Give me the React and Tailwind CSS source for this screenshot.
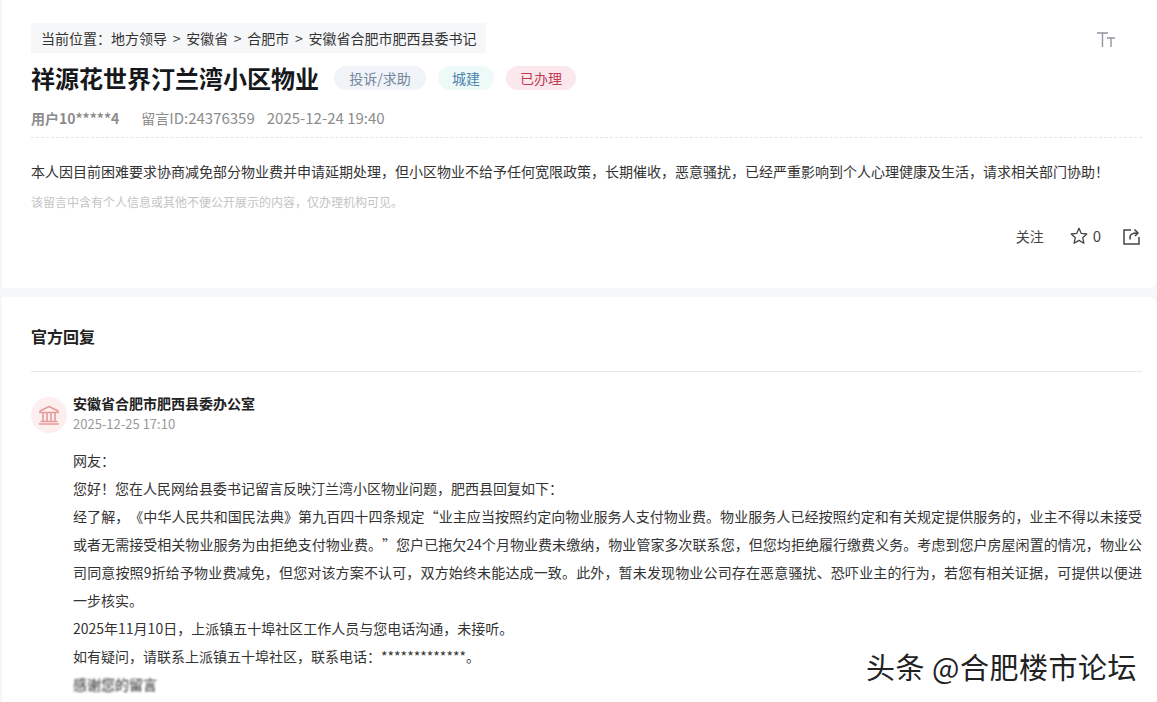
const Landmark = () => (
  <svg width="22" height="20" viewBox="0 0 22 20" fill="none" stroke="#e59a98" strokeWidth="1.6">
    <path d="M11 1.5 2 6v1.5h18V6z" />
    <path d="M5 8v8M9 8v8M13 8v8M17 8v8" />
    <path d="M2.5 16.5h17M1 19h20" />
  </svg>
);

const Star = () => (
  <svg width="18" height="18" viewBox="0 0 18 18" fill="none" stroke="#444" strokeWidth="1.3" strokeLinejoin="round">
    <path d="M9 1.3 11.3 6.4 16.8 7 12.7 10.7 13.9 16.2 9 13.4 4.1 16.2 5.3 10.7 1.2 7 6.7 6.4z" />
  </svg>
);

const Share = () => (
  <svg width="17" height="17" viewBox="0 0 17 17" fill="none" stroke="#444" strokeWidth="1.5">
    <path d="M8 2H1v14h15V9" />
    <path d="M7 11.5V9c0-2.5 2-4 7.5-4" />
    <path d="M11.5 1.5 15 5l-3 3" />
  </svg>
);

const FontSize = () => (
  <svg width="18" height="16" viewBox="0 0 18 16" fill="none" stroke="#8f959e" strokeWidth="1.4">
    <path d="M0 1h11M5.5 1v14" />
    <path d="M10 6h8M14 6v9" />
  </svg>
);

const Sep = () => <span className="mx-[5.7px]">{'>'}</span>;

export default function App() {
  return (
    <div className="h-[702px] overflow-hidden bg-[#f6f7f9] pl-[2px] relative font-['Noto_Sans_CJK_SC','Microsoft_YaHei',sans-serif] [text-spacing-trim:space-all]">
      <section className="h-[288px] bg-white rounded-br-lg pl-[29px] pr-[15px] pt-[23px]">
        <div className="flex justify-between items-start">
          <div className="h-[30px] px-[10px] bg-[#f6f7f9] text-[14px] leading-[30px] text-[#333] whitespace-nowrap">
            当前位置：地方领导<Sep />安徽省<Sep />合肥市<Sep />安徽省合肥市肥西县委书记
          </div>
          <div className="mt-[9px] mr-[27px]"><FontSize /></div>
        </div>
        <div className="flex items-center mt-[9px] h-[32px]">
          <h1 className="text-[24px] font-bold leading-[32px] text-[#16181c]">祥源花世界汀兰湾小区物业</h1>
          <span className="ml-[15px] h-[24px] w-[92px] text-center rounded-full bg-[#f0f3f8] text-[14px] leading-[24px] text-[#76879d]">投诉/求助</span>
          <span className="ml-[12px] h-[24px] px-[14px] rounded-full bg-[#eefaf8] text-[14px] leading-[24px] text-[#4a82ad]">城建</span>
          <span className="ml-[12px] h-[24px] px-[14px] rounded-full bg-[#fbe8ec] text-[14px] leading-[24px] text-[#c23a55]">已办理</span>
        </div>
        <div className="flex items-center mt-[12px] h-[24px] text-[14px] text-[#8c8c8c]">
          <span className="font-bold">用户10*****4</span>
          <span className="ml-[22px]">留言<span className="text-[15px]">ID:24376359</span></span>
          <span className="ml-[12px] text-[15px]">2025-12-24 19:40</span>
        </div>
        <div className="mt-[7px] border-t border-dashed border-[#e5e5e5]" />
        <p className="mt-[19px] text-[14px] leading-[28px] text-[#333]">
          本人因目前困难要求协商减免部分物业费并申请延期处理，但小区物业不给予任何宽限政策，长期催收，恶意骚扰，已经严重影响到个人心理健康及生活，请求相关部门协助！
        </p>
        <p className="mt-[5px] text-[12px] leading-[24px] text-[#c4c4c4]">
          该留言中含有个人信息或其他不便公开展示的内容，仅办理机构可见。
        </p>
        <div className="flex justify-end items-center mt-[10px] pr-[2px] text-[14px] text-[#444] h-[24px]">
          <span>关注</span>
          <span className="ml-[26px]"><Star /></span>
          <span className="ml-[5px] text-[15px]">0</span>
          <span className="ml-[22px]"><Share /></span>
        </div>
      </section>

      <section className="mt-[9px] bg-white rounded-tr-lg h-[405px] pl-[29px] pr-[15px]">
        <h2 className="pt-[25px] text-[16px] font-bold leading-[28px] text-[#222]">官方回复</h2>
        <div className="mt-[21px] border-t border-[#e8e8e8]" />
        <div className="flex mt-[20px]">
          <div className="w-[36px] h-[36px] mt-[5px] rounded-full bg-[#fdeff0] flex items-center justify-center">
            <Landmark />
          </div>
          <div className="ml-[6px]">
            <div className="text-[14px] font-bold leading-[22px] text-[#222]">安徽省合肥市肥西县委办公室</div>
            <div className="text-[13px] leading-[20px] text-[#999]">2025-12-25 17:10</div>
          </div>
        </div>
        <div className="ml-[42px] mt-[12px] text-[14px] leading-[28px] text-[#333]">
          <p>网友：</p>
          <p>您好！您在人民网给县委书记留言反映汀兰湾小区物业问题，肥西县回复如下：</p>
          <p className="text-justify">经了解，《中华人民共和国民法典》第九百四十四条规定“业主应当按照约定向物业服务人支付物业费。物业服务人已经按照约定和有关规定提供服务的，业主不得以未接受或者无需接受相关物业服务为由拒绝支付物业费。”您户已拖欠24个月物业费未缴纳，物业管家多次联系您，但您均拒绝履行缴费义务。考虑到您户房屋闲置的情况，物业公司同意按照9折给予物业费减免，但您对该方案不认可，双方始终未能达成一致。此外，暂未发现物业公司存在恶意骚扰、恐吓业主的行为，若您有相关证据，可提供以便进一步核实。</p>
          <p>2025年11月10日，上派镇五十埠社区工作人员与您电话沟通，未接听。</p>
          <p>如有疑问，请联系上派镇五十埠社区，联系电话：*************。</p>
          <p className="blur-[1px] text-[#222]">感谢您的留言</p>
        </div>
      </section>

      <div className="absolute left-[866px] top-[648px] text-[29px] tracking-[0.5px] leading-[36px] text-[#222] whitespace-nowrap [text-shadow:1px_1px_0_#fff,-1px_-1px_0_#fff]">头条 @合肥楼市论坛</div>
    </div>
  );
}
